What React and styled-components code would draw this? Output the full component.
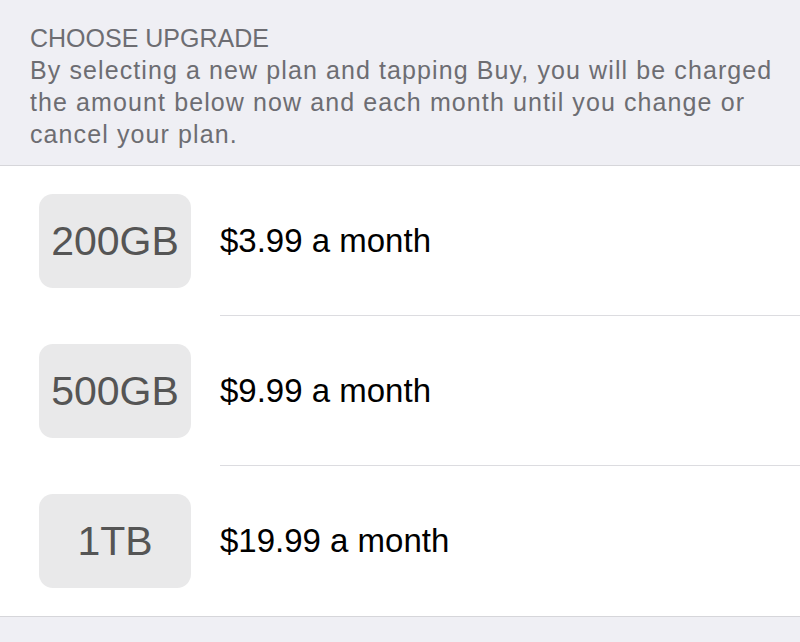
import styled, { createGlobalStyle } from 'styled-components'

const plans = [
  { size: '200GB', price: '$3.99 a month' },
  { size: '500GB', price: '$9.99 a month' },
  { size: '1TB', price: '$19.99 a month' },
]

const GlobalStyle = createGlobalStyle`
  html, body {
    margin: 0;
    padding: 0;
    background: #efeff4;
    font-family: "Liberation Sans", Arial, Helvetica, sans-serif;
    -webkit-font-smoothing: antialiased;
  }
`

const App = () =>
  <Page>
    <GlobalStyle />
    <SectionHeader>
      <HeaderTitle>CHOOSE UPGRADE</HeaderTitle>
      <HeaderText>
        By selecting a new plan and tapping Buy, you will be charged the amount below now and each month until you change or cancel your plan.
      </HeaderText>
    </SectionHeader>

    <PlanList>
      {plans.map(plan =>
        <PlanRow key={plan.size}>
          <SizeTile>{plan.size}</SizeTile>
          <Price>{plan.price}</Price>
        </PlanRow>
      )}
    </PlanList>
  </Page>

const Page = styled.div`
  width: 800px;
  height: 642px;
  overflow: hidden;
  background: #efeff4;
`

const SectionHeader = styled.div`
  padding: 22px 20px 15px 30px;
  color: #6d6d72;
  font-size: 25px;
  line-height: 32px;
  border-bottom: 1px solid #d6d6da;
`

const HeaderTitle = styled.div`
  text-transform: uppercase;
`

const HeaderText = styled.div`
  max-width: 752px;
  letter-spacing: 1.1px;
`

const PlanList = styled.ul`
  list-style: none;
  margin: 0;
  padding: 0;
  background: #fff;
  border-bottom: 1px solid #d6d6da;
`

const PlanRow = styled.li`
  position: relative;
  display: flex;
  align-items: center;
  gap: 29px;
  height: 150px;
  padding-left: 39px;

  &:not(:last-child)::after {
    content: '';
    position: absolute;
    left: 220px;
    right: 0;
    bottom: 0;
    height: 1px;
    background: #dcdce0;
  }
`

const SizeTile = styled.div`
  display: flex;
  align-items: center;
  justify-content: center;
  width: 152px;
  height: 94px;
  border-radius: 14px;
  background: #e9e9ea;
  color: #555;
  font-size: 41px;
`

const Price = styled.span`
  color: #000;
  font-size: 33px;
`

export default App
